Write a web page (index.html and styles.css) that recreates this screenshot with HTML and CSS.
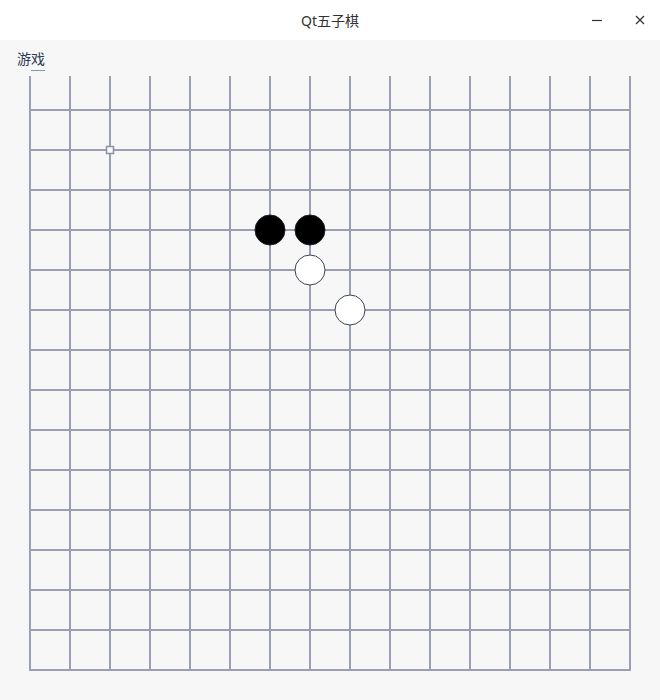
FILE: index.html
```html
<!DOCTYPE html>
<html lang="zh">
<head>
<meta charset="utf-8">
<title>Qt五子棋</title>
<link rel="stylesheet" href="styles.css">
</head>
<body>
<div class="window">
  <header class="titlebar">
    <span class="title">Qt五子棋</span>
    <div class="controls">
      <svg class="ctl" width="14" height="14" viewBox="0 0 14 14"><path d="M2 7.5H12" stroke="#333" stroke-width="1.2"/></svg>
      <svg class="ctl" width="14" height="14" viewBox="0 0 14 14"><path d="M3 3L11 11M11 3L3 11" stroke="#333" stroke-width="1.2"/></svg>
    </div>
  </header>
  <nav class="menubar">
    <span class="menu-item">游<span class="mnemonic">戏</span></span>
  </nav>
  <main class="board-area">
    <svg class="board" width="660" height="624" viewBox="0 0 660 624" id="board"></svg>
  </main>
</div>
<script src="board.js"></script>
</body>
</html>
```
FILE: styles.css
```css
html, body {
  margin: 0;
  padding: 0;
}
body {
  background: #f7f7f7;
  font-family: "Noto Sans", "Noto Sans CJK SC", sans-serif;
}
.window {
  width: 660px;
  height: 700px;
  display: flex;
  flex-direction: column;
  background: #f7f7f7;
  overflow: hidden;
}
.titlebar {
  height: 40px;
  flex: none;
  background: #ffffff;
  position: relative;
  display: flex;
  align-items: center;
  justify-content: center;
}
.title {
  font-size: 14px;
  color: #303030;
  font-family: "Noto Sans", "Noto Sans CJK SC", sans-serif;
}
.controls {
  position: absolute;
  right: 13px;
  top: 13px;
  display: flex;
  gap: 29px;
}
.ctl {
  display: block;
}
.menubar {
  height: 36px;
  flex: none;
  display: flex;
  align-items: flex-start;
  padding-left: 17px;
  box-sizing: border-box;
}
.menu-item {
  margin-top: 8px;
  font-size: 14px;
  line-height: 20px;
  color: #2c3a55;
  font-family: "Noto Sans CJK SC", sans-serif;
}
.mnemonic {
  border-bottom: 1px solid #8c93a3;
  padding-bottom: 2px;
}
.board-area {
  flex: 1;
}
.board {
  display: block;
}
```
FILE: board.js
```js
(function () {
  var NS = "http://www.w3.org/2000/svg";
  var svg = document.getElementById("board");
  var off = 76; // page y of svg top
  var col = "#9aa0b2";
  function el(name, attrs) {
    var e = document.createElementNS(NS, name);
    for (var k in attrs) e.setAttribute(k, attrs[k]);
    svg.appendChild(e);
    return e;
  }
  var i;
  for (i = 0; i < 16; i++) {
    var x = 30 + 40 * i;
    el("line", { x1: x, y1: 0, x2: x, y2: 670 - off, stroke: col, "stroke-width": 2 });
  }
  for (i = 0; i < 15; i++) {
    var y = 110 + 40 * i - off;
    el("line", { x1: 29, y1: y, x2: 631, y2: y, stroke: col, "stroke-width": 2 });
  }
  el("rect", { x: 106.5, y: 146.5 - off, width: 7, height: 7, fill: "#f7f7f7", stroke: "#8c93a6", "stroke-width": 1.5 });
  var stones = [
    [270, 230, "b"], [310, 230, "b"], [310, 270, "w"], [350, 310, "w"]
  ];
  stones.forEach(function (s) {
    if (s[2] === "b") {
      el("circle", { cx: s[0], cy: s[1] - off, r: 15, fill: "#000", stroke: "#1a1f2e", "stroke-width": 1 });
    } else {
      el("circle", { cx: s[0], cy: s[1] - off, r: 15, fill: "#fff", stroke: "#3a4256", "stroke-width": 1 });
    }
  });
})();
```
